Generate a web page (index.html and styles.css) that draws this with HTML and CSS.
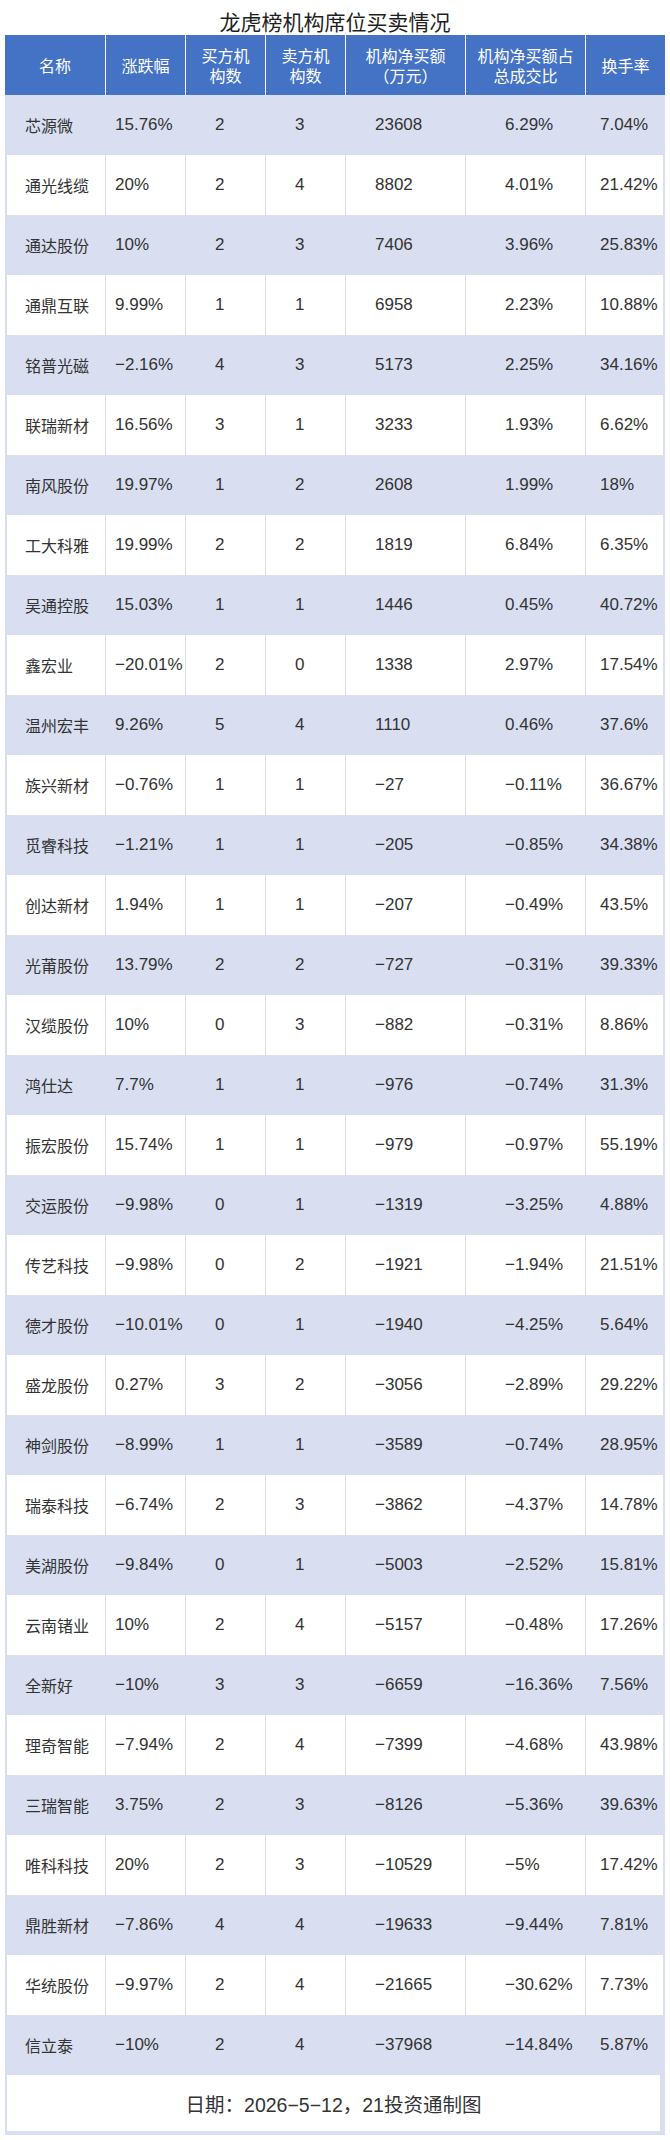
FILE: index.html
```html
<!DOCTYPE html>
<html lang="zh-CN">
<head>
<meta charset="utf-8">
<title>龙虎榜机构席位买卖情况</title>
<link rel="stylesheet" href="styles.css">
</head>
<body>
<h1 class="title">龙虎榜机构席位买卖情况</h1>
<div class="sheet">
  <div class="grid head">
    <div>名称</div>
    <div>涨跌幅</div>
    <div>买方机<br>构数</div>
    <div>卖方机<br>构数</div>
    <div>机构净买额<br>（万元）</div>
    <div>机构净买额占<br>总成交比</div>
    <div>换手率</div>
  </div>
  <div class="grid row alt"><div class="n">芯源微</div><div class="c2">15.76%</div><div class="c3">2</div><div class="c4">3</div><div class="c5">23608</div><div class="c6">6.29%</div><div class="c7">7.04%</div></div>
  <div class="grid row"><div class="n">通光线缆</div><div class="c2">20%</div><div class="c3">2</div><div class="c4">4</div><div class="c5">8802</div><div class="c6">4.01%</div><div class="c7">21.42%</div></div>
  <div class="grid row alt"><div class="n">通达股份</div><div class="c2">10%</div><div class="c3">2</div><div class="c4">3</div><div class="c5">7406</div><div class="c6">3.96%</div><div class="c7">25.83%</div></div>
  <div class="grid row"><div class="n">通鼎互联</div><div class="c2">9.99%</div><div class="c3">1</div><div class="c4">1</div><div class="c5">6958</div><div class="c6">2.23%</div><div class="c7">10.88%</div></div>
  <div class="grid row alt"><div class="n">铭普光磁</div><div class="c2">−2.16%</div><div class="c3">4</div><div class="c4">3</div><div class="c5">5173</div><div class="c6">2.25%</div><div class="c7">34.16%</div></div>
  <div class="grid row"><div class="n">联瑞新材</div><div class="c2">16.56%</div><div class="c3">3</div><div class="c4">1</div><div class="c5">3233</div><div class="c6">1.93%</div><div class="c7">6.62%</div></div>
  <div class="grid row alt"><div class="n">南风股份</div><div class="c2">19.97%</div><div class="c3">1</div><div class="c4">2</div><div class="c5">2608</div><div class="c6">1.99%</div><div class="c7">18%</div></div>
  <div class="grid row"><div class="n">工大科雅</div><div class="c2">19.99%</div><div class="c3">2</div><div class="c4">2</div><div class="c5">1819</div><div class="c6">6.84%</div><div class="c7">6.35%</div></div>
  <div class="grid row alt"><div class="n">吴通控股</div><div class="c2">15.03%</div><div class="c3">1</div><div class="c4">1</div><div class="c5">1446</div><div class="c6">0.45%</div><div class="c7">40.72%</div></div>
  <div class="grid row"><div class="n">鑫宏业</div><div class="c2">−20.01%</div><div class="c3">2</div><div class="c4">0</div><div class="c5">1338</div><div class="c6">2.97%</div><div class="c7">17.54%</div></div>
  <div class="grid row alt"><div class="n">温州宏丰</div><div class="c2">9.26%</div><div class="c3">5</div><div class="c4">4</div><div class="c5">1110</div><div class="c6">0.46%</div><div class="c7">37.6%</div></div>
  <div class="grid row"><div class="n">族兴新材</div><div class="c2">−0.76%</div><div class="c3">1</div><div class="c4">1</div><div class="c5">−27</div><div class="c6">−0.11%</div><div class="c7">36.67%</div></div>
  <div class="grid row alt"><div class="n">觅睿科技</div><div class="c2">−1.21%</div><div class="c3">1</div><div class="c4">1</div><div class="c5">−205</div><div class="c6">−0.85%</div><div class="c7">34.38%</div></div>
  <div class="grid row"><div class="n">创达新材</div><div class="c2">1.94%</div><div class="c3">1</div><div class="c4">1</div><div class="c5">−207</div><div class="c6">−0.49%</div><div class="c7">43.5%</div></div>
  <div class="grid row alt"><div class="n">光莆股份</div><div class="c2">13.79%</div><div class="c3">2</div><div class="c4">2</div><div class="c5">−727</div><div class="c6">−0.31%</div><div class="c7">39.33%</div></div>
  <div class="grid row"><div class="n">汉缆股份</div><div class="c2">10%</div><div class="c3">0</div><div class="c4">3</div><div class="c5">−882</div><div class="c6">−0.31%</div><div class="c7">8.86%</div></div>
  <div class="grid row alt"><div class="n">鸿仕达</div><div class="c2">7.7%</div><div class="c3">1</div><div class="c4">1</div><div class="c5">−976</div><div class="c6">−0.74%</div><div class="c7">31.3%</div></div>
  <div class="grid row"><div class="n">振宏股份</div><div class="c2">15.74%</div><div class="c3">1</div><div class="c4">1</div><div class="c5">−979</div><div class="c6">−0.97%</div><div class="c7">55.19%</div></div>
  <div class="grid row alt"><div class="n">交运股份</div><div class="c2">−9.98%</div><div class="c3">0</div><div class="c4">1</div><div class="c5">−1319</div><div class="c6">−3.25%</div><div class="c7">4.88%</div></div>
  <div class="grid row"><div class="n">传艺科技</div><div class="c2">−9.98%</div><div class="c3">0</div><div class="c4">2</div><div class="c5">−1921</div><div class="c6">−1.94%</div><div class="c7">21.51%</div></div>
  <div class="grid row alt"><div class="n">德才股份</div><div class="c2">−10.01%</div><div class="c3">0</div><div class="c4">1</div><div class="c5">−1940</div><div class="c6">−4.25%</div><div class="c7">5.64%</div></div>
  <div class="grid row"><div class="n">盛龙股份</div><div class="c2">0.27%</div><div class="c3">3</div><div class="c4">2</div><div class="c5">−3056</div><div class="c6">−2.89%</div><div class="c7">29.22%</div></div>
  <div class="grid row alt"><div class="n">神剑股份</div><div class="c2">−8.99%</div><div class="c3">1</div><div class="c4">1</div><div class="c5">−3589</div><div class="c6">−0.74%</div><div class="c7">28.95%</div></div>
  <div class="grid row"><div class="n">瑞泰科技</div><div class="c2">−6.74%</div><div class="c3">2</div><div class="c4">3</div><div class="c5">−3862</div><div class="c6">−4.37%</div><div class="c7">14.78%</div></div>
  <div class="grid row alt"><div class="n">美湖股份</div><div class="c2">−9.84%</div><div class="c3">0</div><div class="c4">1</div><div class="c5">−5003</div><div class="c6">−2.52%</div><div class="c7">15.81%</div></div>
  <div class="grid row"><div class="n">云南锗业</div><div class="c2">10%</div><div class="c3">2</div><div class="c4">4</div><div class="c5">−5157</div><div class="c6">−0.48%</div><div class="c7">17.26%</div></div>
  <div class="grid row alt"><div class="n">全新好</div><div class="c2">−10%</div><div class="c3">3</div><div class="c4">3</div><div class="c5">−6659</div><div class="c6">−16.36%</div><div class="c7">7.56%</div></div>
  <div class="grid row"><div class="n">理奇智能</div><div class="c2">−7.94%</div><div class="c3">2</div><div class="c4">4</div><div class="c5">−7399</div><div class="c6">−4.68%</div><div class="c7">43.98%</div></div>
  <div class="grid row alt"><div class="n">三瑞智能</div><div class="c2">3.75%</div><div class="c3">2</div><div class="c4">3</div><div class="c5">−8126</div><div class="c6">−5.36%</div><div class="c7">39.63%</div></div>
  <div class="grid row"><div class="n">唯科科技</div><div class="c2">20%</div><div class="c3">2</div><div class="c4">3</div><div class="c5">−10529</div><div class="c6">−5%</div><div class="c7">17.42%</div></div>
  <div class="grid row alt"><div class="n">鼎胜新材</div><div class="c2">−7.86%</div><div class="c3">4</div><div class="c4">4</div><div class="c5">−19633</div><div class="c6">−9.44%</div><div class="c7">7.81%</div></div>
  <div class="grid row"><div class="n">华统股份</div><div class="c2">−9.97%</div><div class="c3">2</div><div class="c4">4</div><div class="c5">−21665</div><div class="c6">−30.62%</div><div class="c7">7.73%</div></div>
  <div class="grid row alt"><div class="n">信立泰</div><div class="c2">−10%</div><div class="c3">2</div><div class="c4">4</div><div class="c5">−37968</div><div class="c6">−14.84%</div><div class="c7">5.87%</div></div>
  <div class="foot">日期：2026−5−12，21投资通制图</div>
</div>
</body>
</html>
```

FILE: styles.css
```css
html, body {
  margin: 0;
  padding: 0;
  background: #ffffff;
}

body {
  width: 670px;
  font-family: "Liberation Sans", "Noto Sans CJK SC", sans-serif;
  color: #333333;
}

.title {
  margin: 0;
  padding-top: 8px;
  height: 27px;
  line-height: 27px;
  font-size: 21px;
  font-weight: normal;
  text-align: center;
  color: #1f1f1f;
  font-family: "Noto Sans CJK SC", sans-serif;
}

.sheet {
  width: 660px;
  margin-left: 5px;
}

.grid {
  display: grid;
  grid-template-columns: 100px 80px 80px 80px 120px 120px 80px;
}

.head {
  height: 60px;
  background: #4472c4;
  color: #ffffff;
  font-family: "Noto Sans CJK SC", sans-serif;
  font-size: 16px;
  line-height: 20px;
}

.head > div {
  box-sizing: border-box;
  display: flex;
  align-items: center;
  justify-content: center;
  text-align: center;
  border-left: 1px solid #ffffff;
}

.head > div:first-child {
  border-left: 0;
}

.row {
  height: 60px;
  background: #ffffff;
}

.row.alt {
  background: #d9dff1;
}

.row > div {
  box-sizing: border-box;
  display: flex;
  align-items: center;
  border-left: 1px solid #d9dff1;
  font-size: 17px;
  white-space: nowrap;
}

.row > .n {
  border-left-width: 2px;
  padding-left: 18px;
  font-family: "Noto Sans CJK SC", sans-serif;
  font-size: 16px;
}

.row > .c2 { padding-left: 9px; }
.row > .c3 { padding-left: 29px; }
.row > .c4 { padding-left: 29px; }
.row > .c5 { padding-left: 29px; }
.row > .c6 { padding-left: 39px; }
.row > .c7 {
  padding-left: 14px;
  border-right: 2px solid #d9dff1;
}

.foot {
  box-sizing: border-box;
  width: 660px;
  height: 60px;
  border: 2px solid #d9dff1;
  border-top: 0;
  border-bottom-width: 4px;
  border-right-width: 5px;
  display: flex;
  align-items: center;
  justify-content: center;
  font-size: 19.5px;
  color: #333333;
}
```
